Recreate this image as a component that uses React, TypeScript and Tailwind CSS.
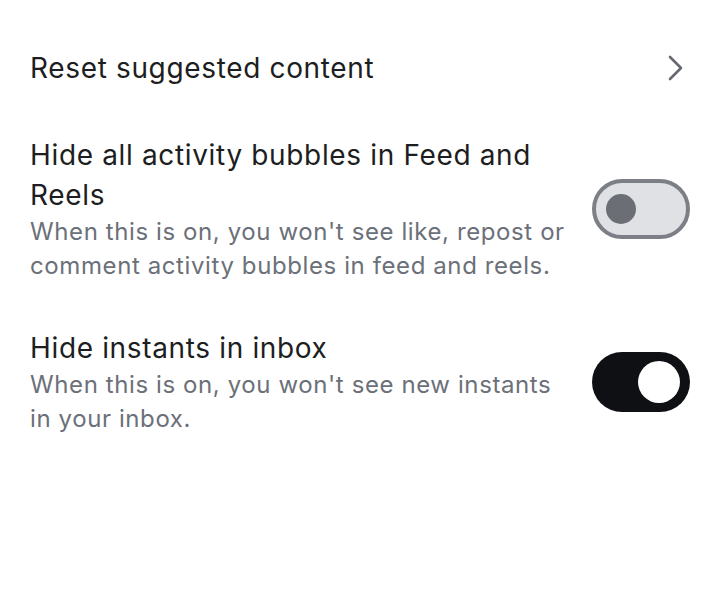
import React from "react";

function Toggle({ on }: { on: boolean }) {
  if (on) {
    return (
      <div className="w-[98px] h-[60px] rounded-full bg-[#0e1014] flex items-center justify-end pr-[10px] shrink-0">
        <div className="w-[42px] h-[42px] rounded-full bg-white" />
      </div>
    );
  }
  return (
    <div className="w-[98px] h-[60px] rounded-full bg-[#dfe1e5] border-[4px] border-[#7c7f85] flex items-center pl-[10px] shrink-0">
      <div className="w-[30px] h-[30px] rounded-full bg-[#6b6e74]" />
    </div>
  );
}

export default function App() {
  return (
    <div
      className="w-[720px] h-[612px] bg-white flex flex-col px-[30px] pt-[48px]"
      style={{ fontFamily: "Inter, 'Noto Sans', sans-serif" }}
    >
      <div className="flex items-center justify-between h-[40px]">
        <div className="text-[28px] leading-[40px] tracking-[0.65px] text-[#1c1e21]">Reset suggested content</div>
        <svg width="20" height="30" viewBox="0 0 20 30" className="mr-[5px]">
          <path d="M5 4 L16 15 L5 26" fill="none" stroke="#65686e" strokeWidth="2.6" strokeLinecap="round" strokeLinejoin="round" />
        </svg>
      </div>
      <div className="flex items-center mt-[47px]">
        <div className="flex-1 pr-[20px]">
          <div className="text-[28px] leading-[40px] tracking-[0.65px] text-[#1c1e21]">Hide all activity bubbles in Feed and Reels</div>
          <div className="text-[24px] leading-[34px] tracking-[0.6px] text-[#6b7079]">
            When this is on, you won't see like, repost or comment activity bubbles in feed and reels.
          </div>
        </div>
        <Toggle on={false} />
      </div>
      <div className="flex items-center mt-[45px]">
        <div className="flex-1 pr-[20px]">
          <div className="text-[28px] leading-[40px] tracking-[0.65px] text-[#1c1e21]">Hide instants in inbox</div>
          <div className="text-[24px] leading-[34px] tracking-[0.6px] text-[#6b7079]">
            When this is on, you won't see new instants in your inbox.
          </div>
        </div>
        <Toggle on={true} />
      </div>
    </div>
  );
}
